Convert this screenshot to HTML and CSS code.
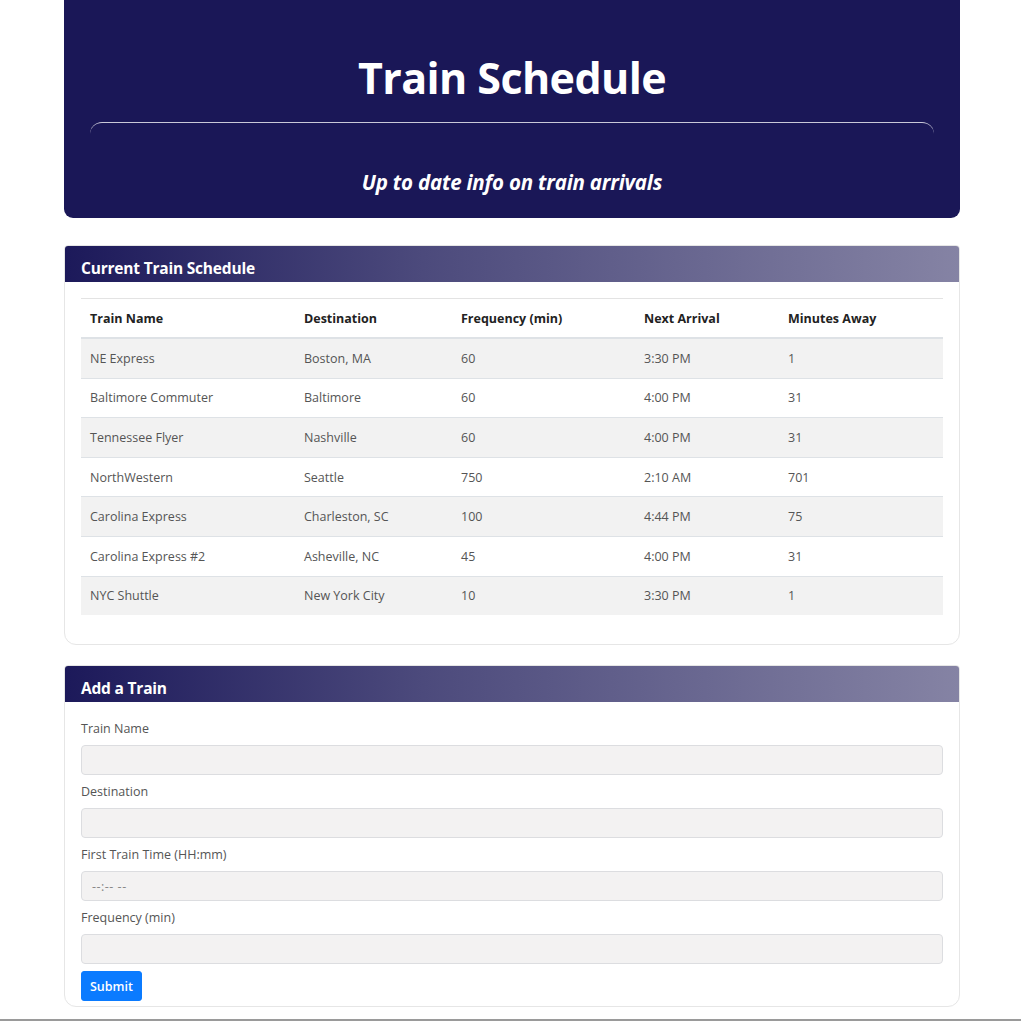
FILE: index.html
```html
<!DOCTYPE html>
<html>
<head>
<meta charset="utf-8">
<title>Train Schedule</title>
<link rel="stylesheet" href="styles.css">
</head>
<body>
<div class="container">
  <header class="jumbo">
    <h1 class="title">Train Schedule</h1>
    <hr class="jumbo-rule">
    <p class="subtitle">Up to date info on train arrivals</p>
  </header>

  <section class="card">
    <div class="card-head">Current Train Schedule</div>
    <div class="card-body table-body">
      <table class="sched">
        <thead>
          <tr><th class="c1">Train Name</th><th class="c2">Destination</th><th class="c3">Frequency (min)</th><th class="c4">Next Arrival</th><th class="c5">Minutes Away</th></tr>
        </thead>
        <tbody>
          <tr><td>NE Express</td><td>Boston, MA</td><td>60</td><td>3:30 PM</td><td>1</td></tr>
          <tr><td>Baltimore Commuter</td><td>Baltimore</td><td>60</td><td>4:00 PM</td><td>31</td></tr>
          <tr><td>Tennessee Flyer</td><td>Nashville</td><td>60</td><td>4:00 PM</td><td>31</td></tr>
          <tr><td>NorthWestern</td><td>Seattle</td><td>750</td><td>2:10 AM</td><td>701</td></tr>
          <tr><td>Carolina Express</td><td>Charleston, SC</td><td>100</td><td>4:44 PM</td><td>75</td></tr>
          <tr><td>Carolina Express #2</td><td>Asheville, NC</td><td>45</td><td>4:00 PM</td><td>31</td></tr>
          <tr><td>NYC Shuttle</td><td>New York City</td><td>10</td><td>3:30 PM</td><td>1</td></tr>
        </tbody>
      </table>
    </div>
  </section>

  <section class="card card-form">
    <div class="card-head">Add a Train</div>
    <form class="card-body form-body">
      <label class="lbl">Train Name</label>
      <div class="field"></div>
      <label class="lbl">Destination</label>
      <div class="field"></div>
      <label class="lbl">First Train Time (HH:mm)</label>
      <div class="field"><span class="ph">--:-- --</span></div>
      <label class="lbl">Frequency (min)</label>
      <div class="field"></div>
      <button type="button" class="btn">Submit</button>
    </form>
  </section>
</div>
<div class="footer-line"></div>
</body>
</html>
```

FILE: styles.css
```css
html, body {
  margin: 0;
  padding: 0;
  background: #ffffff;
  font-family: "Open Sans", "Noto Sans", "Liberation Sans", sans-serif;
  color: #555;
}
.container {
  width: 896px;
  margin-left: 64px;
  display: flex;
  flex-direction: column;
}
.jumbo {
  background: #1a1757;
  border-radius: 0 0 9px 9px;
  height: 218px;
  box-sizing: border-box;
  padding: 50px 26px 0;
  text-align: center;
  color: #fff;
}
.title {
  margin: 0;
  font-size: 43px;
  line-height: 56px;
  font-weight: 700;
  letter-spacing: -0.6px;
}
.jumbo-rule {
  margin: 16px 0 0;
  height: 12px;
  border: 0;
  border-top: 1.5px solid #c9c8d8;
  border-radius: 12px 12px 0 0;
}
.subtitle {
  margin: 33px 0 0;
  font-size: 20.5px;
  line-height: 28px;
  font-weight: 700;
  font-style: italic;
  letter-spacing: -0.2px;
}
.card {
  margin-top: 27px;
  border: 1px solid #e6e6e6;
  border-radius: 4px 4px 12px 12px;
  background: #fff;
  overflow: hidden;
}
.card-form { margin-top: 20px; }
.card-head {
  height: 36px;
  box-sizing: border-box;
  padding: 12px 16px 0;
  background: linear-gradient(to right, #1c195a 0%, #4c4a7c 40%, #8583a4 100%);
  color: #fff;
  font-weight: 700;
  font-size: 15.5px;
  line-height: 20px;
  letter-spacing: -0.2px;
}
.card-body { padding: 16px 16px 0; }
.table-body { padding-bottom: 29px; }
.sched {
  width: 100%;
  border-collapse: collapse;
  font-size: 12.5px;
}
.sched th {
  text-align: left;
  color: #222;
  font-weight: 700;
  height: 38px;
  padding: 0 9px;
  border-top: 1px solid #e3e3e3;
  border-bottom: 2px solid #dee2e6;
}
.sched td {
  height: 38.6px;
  padding: 0 9px;
  border-top: 1px solid #dee2e6;
  color: #555;
}
.sched tbody tr:first-child td { border-top: 0; }
.sched tbody tr:nth-child(odd) td { background: #f2f2f2; }
.c1 { width: 196px; }
.c2 { width: 139px; }
.c3 { width: 165px; }
.c4 { width: 126px; }
.form-body {
  display: flex;
  flex-direction: column;
  align-items: flex-start;
  padding: 19px 16px 5px;
}
.lbl {
  font-size: 12.5px;
  line-height: 16px;
  color: #555;
  margin-bottom: 8px;
}
.field {
  align-self: stretch;
  height: 30px;
  box-sizing: border-box;
  background: #f3f2f2;
  border: 1px solid #dcdde0;
  border-radius: 4px;
  margin-bottom: 9px;
  display: flex;
  align-items: center;
  padding-left: 10px;
}
.field:nth-of-type(4) { margin-bottom: 7px; }
.ph { font-size: 12.5px; color: #888; letter-spacing: 0.5px; }
.btn {
  height: 30px;
  padding: 0 8px;
  background: #0b7bff;
  border: 1px solid #0b7bff;
  border-radius: 3px;
  color: #fff;
  font-family: inherit;
  font-size: 12.5px;
  font-weight: 600;
}
.footer-line {
  margin-top: 12px;
  height: 2px;
  background: #9a9a9a;
}
```
